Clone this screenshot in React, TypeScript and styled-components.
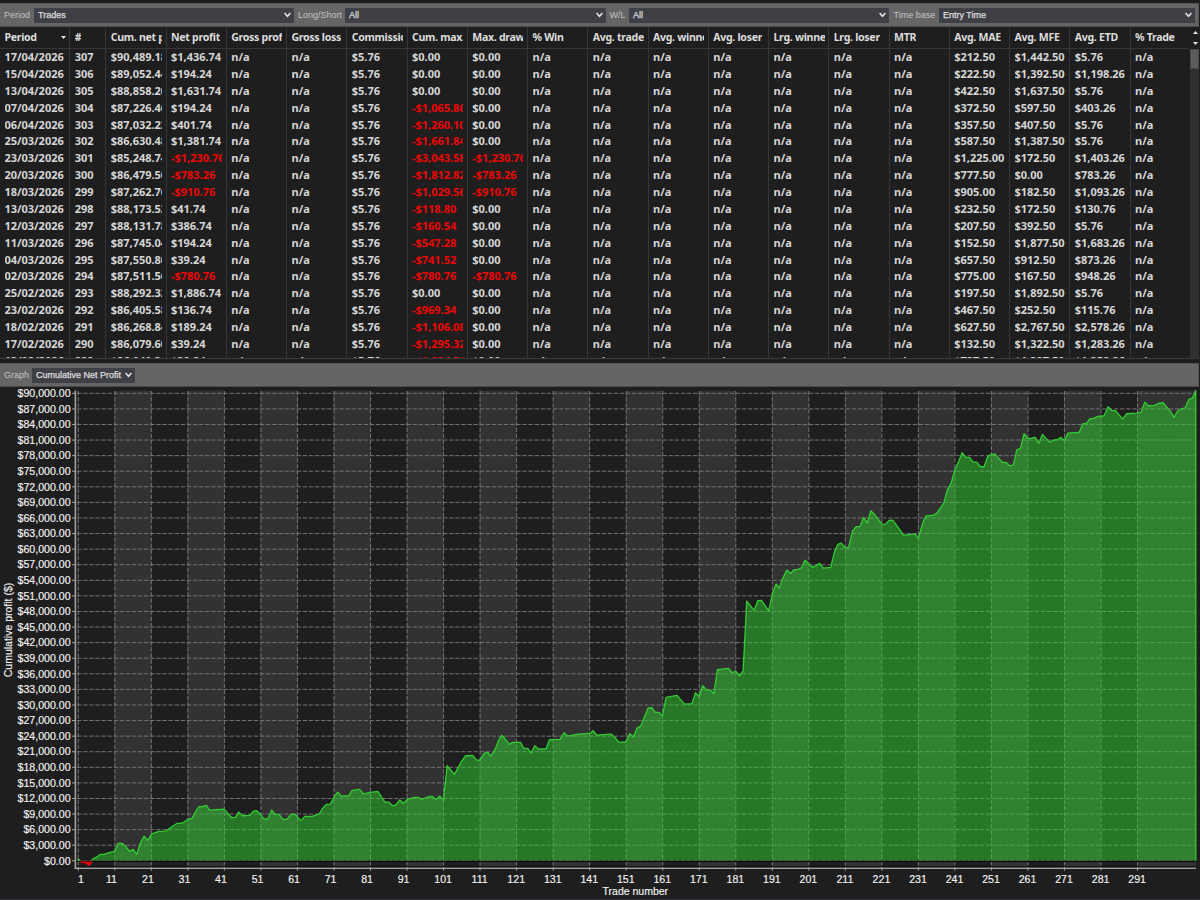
import React from 'react';
import styled, { createGlobalStyle } from 'styled-components';

const GlobalStyle = createGlobalStyle`
  html, body { margin: 0; padding: 0; background: #1e1e1e; }
  * { box-sizing: border-box; }
`;

const Page = styled.main`
  display: flex;
  flex-direction: column;
  width: 1200px;
  height: 900px;
  padding-top: 3px;
  overflow: hidden;
  background: #1e1e1e;
  border-bottom: 1px solid #37343a;
  font-family: 'Liberation Sans', Arial, sans-serif;
`;

const Toolbar = styled.div<{ $height: number }>`
  display: flex;
  align-items: center;
  flex: none;
  height: ${(p) => p.$height}px;
  width: 1199px;
  padding-left: 4px;
  background: #656565;
  border-top: 1px solid #525252;
  border-bottom: 1px solid #4a4a4a;
  border-right: 1px solid #555;
`;

const ToolLabel = styled.span<{ $width: number }>`
  flex: none;
  width: ${(p) => p.$width}px;
  font-size: 9px;
  line-height: 15px;
  color: #c3c3c3;
  white-space: nowrap;
`;

const Combo = styled.div<{ $width: number; $gap?: number }>`
  display: flex;
  align-items: center;
  justify-content: space-between;
  flex: none;
  width: ${(p) => p.$width}px;
  height: 15px;
  margin-right: ${(p) => p.$gap ?? 0}px;
  padding: 0 3px 0 4px;
  background: #3f3f46;
  color: #e2e2e2;
  font-size: 9px;
  line-height: 15px;
  white-space: nowrap;
  -webkit-text-stroke: 0.25px #d8d8d8;
`;

const Chevron = () => (
  <svg width="7" height="6" viewBox="0 0 7 6">
    <path d="M0.6 1 L3.5 4.3 L6.4 1" fill="none" stroke="#e4e4e4" strokeWidth="1.5" />
  </svg>
);

const TableArea = styled.section`
  display: flex;
  flex: none;
  height: 332px;
  border-bottom: 1px solid #3a3a3c;
  overflow: hidden;
`;

const Grid = styled.div`
  display: flex;
  width: 1190px;
  flex: none;
`;

const Column = styled.div<{ $width: number; $last?: boolean }>`
  flex: none;
  width: ${(p) => p.$width}px;
  border-right: 1px solid ${(p) => (p.$last ? 'transparent' : '#363638')};
  overflow: hidden;
`;

const HeadCell = styled.div`
  display: flex;
  align-items: center;
  justify-content: space-between;
  height: 22px;
  padding: 0 3.6px 1px 4.4px;
  border-bottom: 1px solid #363638;
  font: 700 10.6px/19px 'Noto Sans', sans-serif;
  letter-spacing: -0.3px;
  color: #dcdcdc;
`;

const Cell = styled.div<{ $negative?: boolean }>`
  height: 16.88px;
  padding: 0 3.8px 0 4.5px;
  font: 700 11px/16px 'Noto Sans', sans-serif;
  letter-spacing: -0.03px;
  color: ${(p) => (p.$negative ? '#ee0404' : '#d6d6d6')};
`;

const Clip = styled.span`
  display: block;
  overflow: hidden;
  white-space: nowrap;
`;

const ScrollColumn = styled.div`
  display: flex;
  flex-direction: column;
  width: 9px;
`;

const ScrollHead = styled.div`
  display: flex;
  flex-direction: column;
  align-items: center;
  justify-content: space-between;
  height: 22px;
  padding: 4px 0 4px 1px;
`;

const ScrollTrack = styled.div`
  flex: 1;
  background: #303032;
`;

const ScrollThumb = styled.div`
  height: 20px;
  background: #5c5c5e;
  border: 1px solid #4a4a4c;
`;

const Splitter = styled.div`
  flex: none;
  height: 4px;
  background: #1e1e1e;
`;

const ChartPanel = styled.section`
  flex: none;
  height: 512px;
`;

type ColumnSpec = { title: string; width: number; values: string[] };

const rows = `17/04/2026|307|$90,489.18|$1,436.74|$0.00|$0.00|$212.50|$1,442.50|$5.76
15/04/2026|306|$89,052.44|$194.24|$0.00|$0.00|$222.50|$1,392.50|$1,198.26
13/04/2026|305|$88,858.20|$1,631.74|$0.00|$0.00|$422.50|$1,637.50|$5.76
07/04/2026|304|$87,226.46|$194.24|-$1,065.86|$0.00|$372.50|$597.50|$403.26
06/04/2026|303|$87,032.22|$401.74|-$1,260.10|$0.00|$357.50|$407.50|$5.76
25/03/2026|302|$86,630.48|$1,381.74|-$1,661.84|$0.00|$587.50|$1,387.50|$5.76
23/03/2026|301|$85,248.74|-$1,230.76|-$3,043.58|-$1,230.76|$1,225.00|$172.50|$1,403.26
20/03/2026|300|$86,479.50|-$783.26|-$1,812.82|-$783.26|$777.50|$0.00|$783.26
18/03/2026|299|$87,262.76|-$910.76|-$1,029.56|-$910.76|$905.00|$182.50|$1,093.26
13/03/2026|298|$88,173.52|$41.74|-$118.80|$0.00|$232.50|$172.50|$130.76
12/03/2026|297|$88,131.78|$386.74|-$160.54|$0.00|$207.50|$392.50|$5.76
11/03/2026|296|$87,745.04|$194.24|-$547.28|$0.00|$152.50|$1,877.50|$1,683.26
04/03/2026|295|$87,550.80|$39.24|-$741.52|$0.00|$657.50|$912.50|$873.26
02/03/2026|294|$87,511.56|-$780.76|-$780.76|-$780.76|$775.00|$167.50|$948.26
25/02/2026|293|$88,292.32|$1,886.74|$0.00|$0.00|$197.50|$1,892.50|$5.76
23/02/2026|292|$86,405.58|$136.74|-$969.34|$0.00|$467.50|$252.50|$115.76
18/02/2026|291|$86,268.84|$189.24|-$1,106.08|$0.00|$627.50|$2,767.50|$2,578.26
17/02/2026|290|$86,079.60|$39.24|-$1,295.32|$0.00|$132.50|$1,322.50|$1,283.26
13/02/2026|289|$86,040.36|$39.24|-$1,334.56|$0.00|$737.50|$1,397.50|$1,358.26`
  .split('\n')
  .map((line) => line.split('|'));

const pick = (index: number) => rows.map((r) => r[index]);
const same = (text: string) => rows.map(() => text);
const W = 60.25;

const columns: ColumnSpec[] = [
  { title: 'Period', width: 70.3, values: pick(0) },
  { title: '#', width: 36, values: pick(1) },
  { title: 'Cum. net profit', width: W, values: pick(2) },
  { title: 'Net profit', width: W, values: pick(3) },
  { title: 'Gross profit', width: W, values: same('n/a') },
  { title: 'Gross loss', width: W, values: same('n/a') },
  { title: 'Commission', width: W, values: same('$5.76') },
  { title: 'Cum. max. drawdown', width: W, values: pick(4) },
  { title: 'Max. drawdown', width: W, values: pick(5) },
  { title: '% Win', width: W, values: same('n/a') },
  { title: 'Avg. trade', width: W, values: same('n/a') },
  { title: 'Avg. winner', width: W, values: same('n/a') },
  { title: 'Avg. loser', width: W, values: same('n/a') },
  { title: 'Lrg. winner', width: W, values: same('n/a') },
  { title: 'Lrg. loser', width: W, values: same('n/a') },
  { title: 'MTR', width: W, values: same('n/a') },
  { title: 'Avg. MAE', width: W, values: pick(6) },
  { title: 'Avg. MFE', width: W, values: pick(7) },
  { title: 'Avg. ETD', width: W, values: pick(8) },
  { title: '% Trade', width: 59, values: same('n/a') },
];

const Triangle = ({ up }: { up?: boolean }) => (
  <svg width="5" height="3" viewBox="0 0 5 3">
    <path d={up ? 'M0 3 L2.5 0 L5 3Z' : 'M0 0 L5 0 L2.5 3Z'} fill="#e6e6e6" />
  </svg>
);

/* Equity curve, stored as runs of points in thirds of a pixel from each run's origin. */
const runs: { x: number; y: number; points: string }[] = [
  {
    x: 0,
    y: 740,
    points:
      '276,360 278,356 290,351 300,343 312,343 325,338 343,334 354,310 367,310 378,320 388,334 399,328 410,343 421,308 432,288 443,301 455,281 477,274 497,273 512,262 530,250 543,250 552,246 564,237 575,235 586,216 596,200 608,199 619,196 628,210 672,207 695,233 706,232 716,216 727,227 750,226 760,213 770,212 781,223 792,237 804,236 815,210 825,223 837,223 849,238 860,238 873,223 884,222 900,239',
  },
  {
    x: 300,
    y: 680,
    points:
      '4,421 14,409 36,409 58,401 68,384 79,373 91,372 103,349 113,336 124,348 146,347 156,331 179,328 189,341 212,337 233,334 244,350 254,366 266,366 277,377 288,374 299,359 310,370 321,358 343,352 354,352 365,358 385,350 397,349 408,358 419,348 430,360 441,257 463,283 485,243 496,227 518,226 529,240 540,240 552,220 563,217 573,228 585,208 596,180 606,166 628,193 638,187 661,187 671,205 683,205 693,219 704,197 715,207 738,206 748,179 780,178 792,158 803,168 835,162 868,160 879,152 890,165',
  },
  {
    x: 560,
    y: 580,
    points:
      '154,462 165,473 176,486 197,486 209,461 220,471 231,444 242,438 264,384 275,383 286,397 297,397 307,408 318,352 351,346 373,372 396,371 406,338 417,349 428,317 439,330 451,330 461,341 472,269 505,265 516,278 527,273 538,287 549,273 560,63 582,91 593,62 604,61 626,92 637,40 648,12 658,24',
  },
  {
    x: 780,
    y: 480,
    points:
      '7,297 20,270 31,280 42,269 53,268 64,263 75,240 97,262 119,250 130,264 152,262 163,216 173,193 184,189 195,203 206,201 217,153 228,140 240,139 250,112 262,129 272,92 283,103 305,132 316,133 327,121 338,120 371,166 404,161 415,175 426,135',
  },
  {
    x: 920,
    y: 380,
    points:
      '17,408 40,405 50,400 71,369 82,329 93,309 104,270 115,246 126,218 137,232 148,232 159,246 170,246 181,260 192,260 203,229 214,223 225,222 247,247 258,247 269,257 280,254 290,209 301,205 312,161 323,175 334,175 345,171 356,190 367,163 389,187 400,180 411,179 422,172 433,181 444,159 477,157 488,131 499,130 510,116 521,115 532,109 552,107 564,80 575,91 586,92 608,117 619,101 650,99 663,96 674,66 685,77 703,76 718,69 729,68 751,94 762,112 773,92 784,86 795,83 806,58 817,54 827,31',
  },
];

const curve = runs
  .flatMap((run) =>
    run.points.split(' ').map((pair) => {
      const [px, py] = pair.split(',').map(Number);
      return `${(run.x + px / 3 + 0.1).toFixed(2)},${(run.y + py / 3 + 0.1).toFixed(2)}`;
    })
  )
  .join(' ');

const tradeX = (trade: number) => 78.1 + (trade - 1) * 3.6525;
const profitY = (profit: number) => 860.8 - (profit / 3000) * 15.583;
const tradeTicks = Array.from({ length: 30 }, (_, i) => 1 + i * 10);
const profitTicks = Array.from({ length: 31 }, (_, i) => i * 3000);
const money = (n: number) => `$${n.toLocaleString('en-US')}.00`;
const labelX = (trade: number) => tradeX(trade) + (trade < 10 ? 2.8 : trade < 100 ? -3.2 : -0.2);
const stripeEnd = (trade: number) => (trade === 291 ? 1196 : tradeX(trade + 10));

const EquityChart = () => (
  <svg
    width="1200"
    height="512"
    viewBox="0 387 1200 512"
    fontFamily="'Liberation Sans', Arial, sans-serif"
    fontSize="10.6"
    fill="#f4f4f4"
    display="block"
  >
    {tradeTicks.map((t, i) =>
      i % 2 ? (
        <rect
          key={t}
          x={tradeX(t)}
          y="390.6"
          width={stripeEnd(t) - tradeX(t)}
          height="477"
          fill="#323232"
        />
      ) : null
    )}
    <line x1="76" x2="1196" y1="866.8" y2="866.8" stroke="#111" strokeWidth="1" />
    <g stroke="#747474" strokeWidth="1" strokeDasharray="4.4 1.7">
      {profitTicks.map((p) => (
        <line key={p} x1="77" x2="1196" y1={profitY(p)} y2={profitY(p)} />
      ))}
      {tradeTicks.map((t) => (
        <line key={t} x1={tradeX(t) + 0.2} x2={tradeX(t) + 0.2} y1="391" y2="868" />
      ))}
    </g>
    <line x1="76" x2="1196" y1="861.4" y2="861.4" stroke="#080808" strokeWidth="1.2" />
    <polygon points={`${curve} 1195.8,860.6 92,860.6`} fill="#32cd32" fillOpacity="0.5" />
    <polyline points={`${curve} 1195.8,860.6`} fill="none" stroke="#32cd32" strokeWidth="1.3" strokeLinejoin="round" />
    <path d="M77.4 859.6 L78.6 858.8 L80 860.4 Z" fill="#32cd32" stroke="#32cd32" />
    <path d="M80.5 861.9 L86 862.5 L89 865.2 L91.7 861.5" fill="#c00" stroke="#f00" strokeWidth="1.5" />
    <line x1="75.4" x2="75.4" y1="390.6" y2="868.8" stroke="#a0a0a0" strokeWidth="1.6" />
    <line x1="74.6" x2="1196" y1="868.3" y2="868.3" stroke="#cfcfcf" strokeWidth="1.1" />
    <g stroke="#b0b0b0" strokeWidth="0.9">
      {profitTicks.map((p) => (
        <line key={p} x1="72" x2="75" y1={profitY(p)} y2={profitY(p)} />
      ))}
      {tradeTicks.map((t) => (
        <line key={t} x1={tradeX(t) + 0.2} x2={tradeX(t) + 0.2} y1="868" y2="870.6" />
      ))}
    </g>
    <g stroke="#f4f4f4" strokeWidth="0.15">
      {profitTicks.map((p) => (
        <text key={p} x="70.6" y={profitY(p) + 3.7} textAnchor="end">
          {money(p)}
        </text>
      ))}
      {tradeTicks.map((t) => (
        <text key={t} x={labelX(t)} y="882.6" textAnchor="middle">
          {t}
        </text>
      ))}
      <text x="635.3" y="894.7" textAnchor="middle" fontSize="10.5">
        Trade number
      </text>
      <text transform="translate(12 630) rotate(-90)" textAnchor="middle" fontSize="10.5">
        Cumulative profit ($)
      </text>
    </g>
  </svg>
);

export default function App() {
  return (
    <Page>
      <GlobalStyle />
      <Toolbar $height={24}>
        <ToolLabel $width={30}>Period</ToolLabel>
        <Combo $width={260} $gap={4}>Trades<Chevron /></Combo>
        <ToolLabel $width={47}>Long/Short</ToolLabel>
        <Combo $width={260.5} $gap={4}>All<Chevron /></Combo>
        <ToolLabel $width={19.5}>W/L</ToolLabel>
        <Combo $width={260} $gap={4.5}>All<Chevron /></Combo>
        <ToolLabel $width={45.5}>Time base</ToolLabel>
        <Combo $width={256}>Entry Time<Chevron /></Combo>
      </Toolbar>
      <TableArea>
        <Grid>
          {columns.map((c, i) => (
            <Column key={c.title} $width={c.width} $last={i === columns.length - 1}>
              <HeadCell>
                <Clip>{c.title}</Clip>
                {i === 0 && <Triangle />}
              </HeadCell>
              {c.values.map((v, r) => (
                <Cell key={r} $negative={v.startsWith('-')}>
                  <Clip>{v}</Clip>
                </Cell>
              ))}
            </Column>
          ))}
        </Grid>
        <ScrollColumn>
          <ScrollHead>
            <Triangle up />
            <Triangle />
          </ScrollHead>
          <ScrollTrack>
            <ScrollThumb />
          </ScrollTrack>
        </ScrollColumn>
      </TableArea>
      <Splitter />
      <Toolbar $height={24}>
        <ToolLabel $width={28}>Graph</ToolLabel>
        <Combo $width={102.5}>Cumulative Net Profit<Chevron /></Combo>
      </Toolbar>
      <ChartPanel>
        <EquityChart />
      </ChartPanel>
    </Page>
  );
}
